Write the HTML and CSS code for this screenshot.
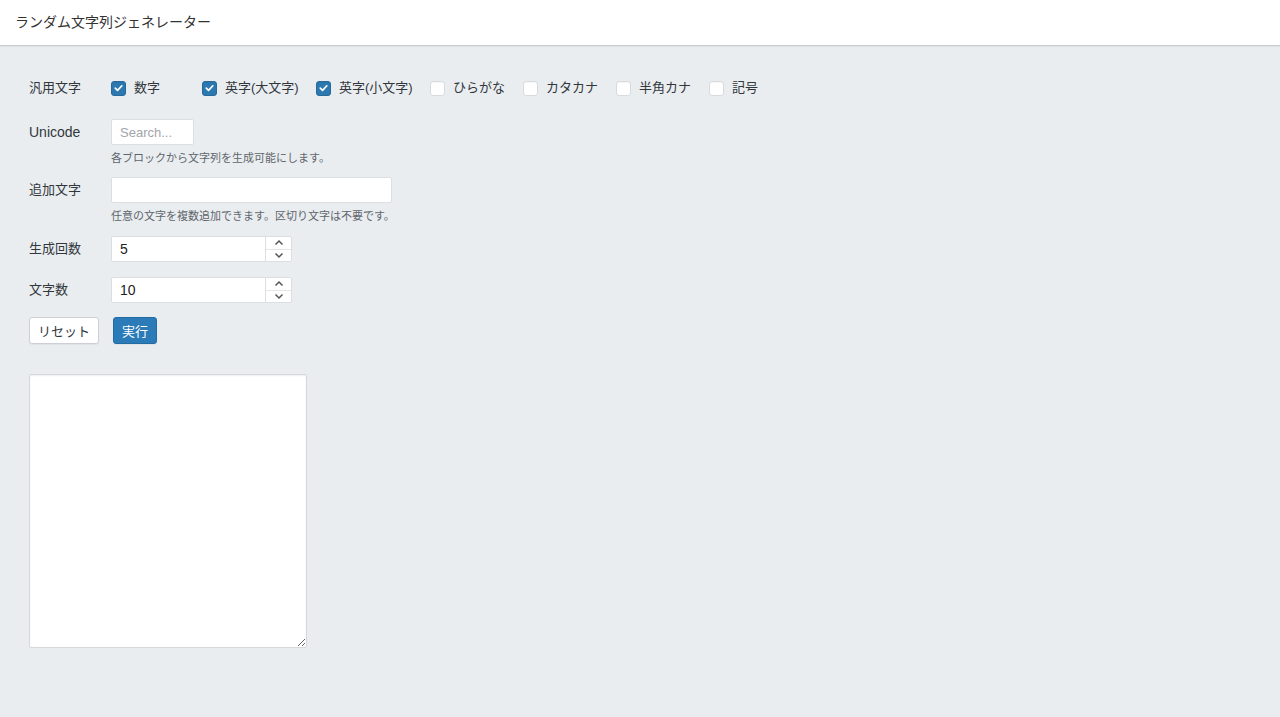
FILE: index.html
```html
<!DOCTYPE html>
<html>
    <head>
        <title>ランダム文字列ジェネレーター</title>
        <meta charset="utf-8">
        <link rel="stylesheet" href="styles.css">
    </head>
    <body>
        <header class="topbar">
            <h1 class="title">ランダム文字列ジェネレーター</h1>
        </header>
        <main class="content">
            <div class="row row-kinds">
                <div class="label">汎用文字</div>
                <div class="kinds">
                    <label class="kind first"><span class="box checked"><svg viewBox="0 0 14 14" width="14" height="14"><path d="M3.5 7.2 L6 9.6 L10.6 4.6" fill="none" stroke="#fff" stroke-width="1.8" stroke-linecap="round" stroke-linejoin="round"/></svg></span>数字</label>
                    <label class="kind wide"><span class="box checked"><svg viewBox="0 0 14 14" width="14" height="14"><path d="M3.5 7.2 L6 9.6 L10.6 4.6" fill="none" stroke="#fff" stroke-width="1.8" stroke-linecap="round" stroke-linejoin="round"/></svg></span>英字(大文字)</label>
                    <label class="kind wide"><span class="box checked"><svg viewBox="0 0 14 14" width="14" height="14"><path d="M3.5 7.2 L6 9.6 L10.6 4.6" fill="none" stroke="#fff" stroke-width="1.8" stroke-linecap="round" stroke-linejoin="round"/></svg></span>英字(小文字)</label>
                    <label class="kind"><span class="box"></span>ひらがな</label>
                    <label class="kind"><span class="box"></span>カタカナ</label>
                    <label class="kind"><span class="box"></span>半角カナ</label>
                    <label class="kind"><span class="box"></span>記号</label>
                </div>
            </div>

            <div class="row row-unicode">
                <div class="label latin">Unicode</div>
                <div class="field">
                    <input type="text" class="text search" placeholder="Search...">
                    <p class="hint">各ブロックから文字列を生成可能にします。</p>
                </div>
            </div>

            <div class="row row-extra">
                <div class="label">追加文字</div>
                <div class="field">
                    <input type="text" class="text extra">
                    <p class="hint">任意の文字を複数追加できます。区切り文字は不要です。</p>
                </div>
            </div>

            <div class="row row-count">
                <div class="label">生成回数</div>
                <div class="number">
                    <span class="num-value">5</span>
                    <span class="spin">
                        <span class="spin-btn"><svg viewBox="0 0 10 7" width="10" height="7"><path d="M1.5 5.5 L5 2 L8.5 5.5" fill="none" stroke="#555" stroke-width="1.5"/></svg></span>
                        <span class="spin-btn"><svg viewBox="0 0 10 7" width="10" height="7"><path d="M1.5 1.5 L5 5 L8.5 1.5" fill="none" stroke="#555" stroke-width="1.5"/></svg></span>
                    </span>
                </div>
            </div>

            <div class="row row-length">
                <div class="label">文字数</div>
                <div class="number">
                    <span class="num-value">10</span>
                    <span class="spin">
                        <span class="spin-btn"><svg viewBox="0 0 10 7" width="10" height="7"><path d="M1.5 5.5 L5 2 L8.5 5.5" fill="none" stroke="#555" stroke-width="1.5"/></svg></span>
                        <span class="spin-btn"><svg viewBox="0 0 10 7" width="10" height="7"><path d="M1.5 1.5 L5 5 L8.5 1.5" fill="none" stroke="#555" stroke-width="1.5"/></svg></span>
                    </span>
                </div>
            </div>

            <div class="buttons">
                <button class="button">リセット</button>
                <button class="button primary">実行</button>
            </div>

            <textarea class="result"></textarea>
        </main>
    </body>
</html>
```

FILE: styles.css
```css
html, body{
    margin: 0;
    background-color: #e9edf0;
    font-family: "Liberation Sans", "Noto Sans CJK JP", sans-serif;
    color: #32373c;
}
.topbar{
    height: 45px;
    background-color: #fff;
    border-bottom: 1px solid #c9cbcd;
    box-shadow: 0 1px 1px rgba(0,0,0,0.04);
}
.title{
    margin: 0;
    padding-left: 15px;
    font-size: 14px;
    font-weight: normal;
    line-height: 44px;
    color: #333;
}
.content{
    padding: 28px 29px 40px;
    font-size: 13px;
}
.row{
    display: flex;
    align-items: flex-start;
}
.label{
    width: 82px;
    flex: none;
    line-height: 26px;
    font-size: 13px;
}
.label.latin{
    font-size: 14px;
}
.row-kinds{
    height: 28px;
    align-items: center;
}
.row-kinds .label{
    line-height: 28px;
}
.kinds{
    display: flex;
    align-items: center;
}
.kind{
    display: flex;
    align-items: center;
    width: 74px;
    margin-right: 19px;
    line-height: 28px;
    white-space: nowrap;
}
.kind.first{
    width: 72px;
}
.kind.wide{
    width: 95px;
}
.kind:last-child{
    margin-right: 0;
}
.box{
    width: 15px;
    height: 15px;
    flex: none;
    box-sizing: border-box;
    margin-right: 8px;
    border: 1px solid #d8dbde;
    border-radius: 3px;
    background-color: #fff;
    display: flex;
    align-items: center;
    justify-content: center;
    box-shadow: inset 0 1px 1px rgba(0,0,0,0.04);
}
.box.checked{
    background-color: #2b79b0;
    border-color: #26699a;
}
.row-unicode{
    margin-top: 17px;
}
.row-extra{
    margin-top: 11px;
}
.row-count{
    margin-top: 12px;
}
.row-length{
    margin-top: 15px;
}
.field{
    display: flex;
    flex-direction: column;
}
.text{
    height: 26px;
    box-sizing: border-box;
    border: 1px solid #dcdfe2;
    border-radius: 2px;
    background-color: #fff;
    padding: 0 8px;
    font-family: inherit;
    font-size: 13px;
    color: #32373c;
    outline: none;
}
.text::placeholder{
    color: #a2a6aa;
}
.search{
    width: 83px;
}
.extra{
    width: 281px;
}
.hint{
    margin: 5px 0 0;
    font-size: 11px;
    line-height: 16px;
    color: #5f666c;
}
.number{
    display: flex;
    width: 181px;
    height: 26px;
    box-sizing: border-box;
    border: 1px solid #dcdfe2;
    border-radius: 2px;
    background-color: #fff;
}
.num-value{
    flex: 1;
    padding-left: 8px;
    line-height: 24px;
    font-size: 14px;
    color: #222;
}
.spin{
    width: 25px;
    display: flex;
    flex-direction: column;
    border-left: 1px solid #dcdfe2;
}
.spin-btn{
    flex: 1;
    display: flex;
    align-items: center;
    justify-content: center;
}
.spin-btn:first-child{
    border-bottom: 1px solid #e3e5e7;
}
.buttons{
    display: flex;
    margin-top: 14px;
    gap: 14px;
}
.button{
    height: 27px;
    padding: 0 8px;
    background-color: #fff;
    border: 1px solid #ccd0d4;
    border-radius: 3px;
    font-family: inherit;
    font-size: 13px;
    color: #32373c;
    box-shadow: 0 1px 0 rgba(0,0,0,0.04);
}
.primary{
    padding: 0 8px;
    background-color: #2b7bb9;
    border-color: #236ca3;
    color: #fff;
}
.result{
    display: block;
    margin-top: 30px;
    width: 278px;
    height: 274px;
    box-sizing: border-box;
    border: 1px solid #d6d9dc;
    border-radius: 2px;
    background-color: #fff;
    box-shadow: inset 0 1px 2px rgba(0,0,0,0.07);
}
```
